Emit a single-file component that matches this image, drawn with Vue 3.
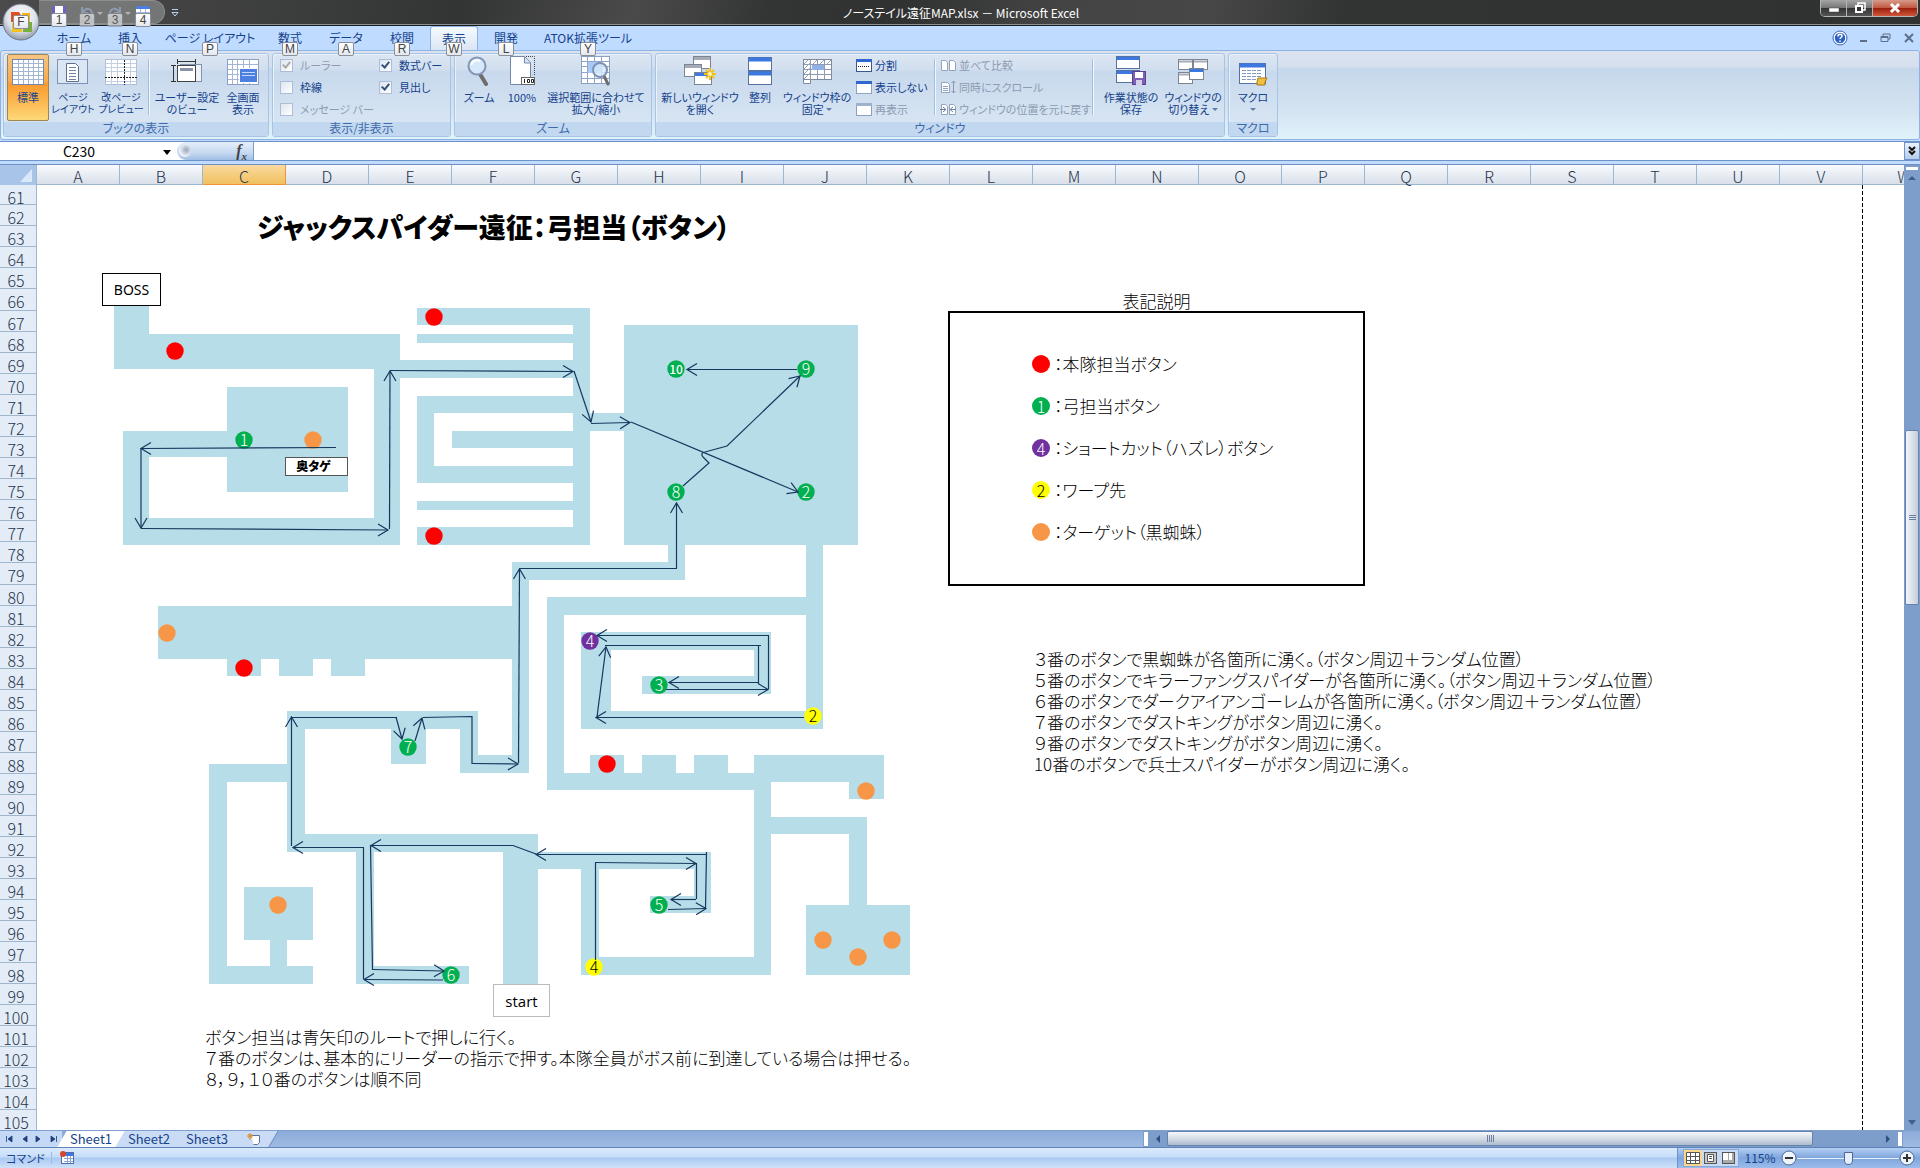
<template>
  <div class="excel">
    <header class="titlebar">
      <div class="qat">
        <button v-for="q in quickItems" :key="q.key" type="button" class="qat-btn" :class="{ 'is-dim': q.dim }" :aria-label="q.name">
          <svg v-if="q.name === 'save'" width="16" height="16" viewBox="0 0 16 16">
            <rect x="1" y="1" width="14" height="14" rx="1" fill="#6a63c4" />
            <rect x="4" y="1" width="8" height="7" fill="#fff" />
            <rect x="4" y="10" width="8" height="5" fill="#d9dcf2" />
          </svg>
          <svg v-else-if="q.name === 'undo'" width="24" height="16" viewBox="0 0 24 16">
            <path d="M3 2v6h6M4 7c3-5 9-4 9 2 0 3-2 4-4 5" fill="none" stroke="#9fb4d6" stroke-width="2" />
            <path d="M18 7h6l-3 3z" fill="#ddd" />
          </svg>
          <svg v-else-if="q.name === 'redo'" width="24" height="16" viewBox="0 0 24 16">
            <path d="M13 2v6H7M12 7C9 2 3 3 3 9c0 3 2 4 4 5" fill="none" stroke="#9fb4d6" stroke-width="2" />
            <path d="M18 7h6l-3 3z" fill="#ddd" />
          </svg>
          <svg v-else width="16" height="16" viewBox="0 0 16 16">
            <rect x="1" y="1" width="14" height="14" fill="#fff" />
            <rect x="1" y="1" width="14" height="3" fill="#4a7fe0" />
            <path d="M1 7.500h14M1 11.500h14M5.500 4v11M10.500 4v11" stroke="#9db8e0" />
          </svg>
          <kbd class="keytip qat-tip">{{ q.key }}</kbd>
        </button>
      </div>
      <svg class="qat-more" width="10" height="10" viewBox="0 0 10 10"><path d="M2 1.500h6M2 4.500h6L5 8z" fill="none" stroke="#b8d0f0" /></svg>
      <h1 class="caption">ノーステイル遠征MAP.xlsx － Microsoft Excel</h1>
      <div class="win-buttons">
        <button type="button" class="win-btn" aria-label="minimize"><svg width="12" height="10"><rect x="1" y="5" width="10" height="4" fill="#fff" stroke="#444" stroke-width=".5" /></svg></button>
        <button type="button" class="win-btn" aria-label="restore"><svg width="12" height="12"><path d="M4 3V1h7v7H9" fill="none" stroke="#fff" stroke-width="1.500" /><rect x="2" y="4" width="6" height="6" fill="#333" stroke="#fff" stroke-width="2" /></svg></button>
        <button type="button" class="win-btn win-close" aria-label="close"><svg width="12" height="10"><path d="M2 1l8 8M10 1L2 9" stroke="#fff" stroke-width="3" /></svg></button>
      </div>
    </header>

    <button type="button" class="office-btn" aria-label="Office">
      <svg width="38" height="38" viewBox="0 0 38 38">
        <defs>
          <radialGradient id="orb" cx=".5" cy=".35" r=".65">
            <stop offset="0" stop-color="#fff" /><stop offset=".6" stop-color="#dfe3ea" /><stop offset="1" stop-color="#8f99a8" />
          </radialGradient>
        </defs>
        <circle cx="19" cy="19" r="18" fill="url(#orb)" stroke="#6f7885" />
        <path d="M17 9H9v10h5v-5h6z" fill="#e2501d" />
        <path d="M20 10h8v9h-4v-5h-4z" fill="#f5b21b" />
        <path d="M10 20h4v5h6v4H10z" fill="#f0c31e" />
        <path d="M22 19h8v10h-9v-4h5z" fill="#79ae3a" />
      </svg>
      <kbd class="keytip office-tip">F</kbd>
    </button>

    <nav class="tabs">
      <button v-for="t in tabs" :key="t.key" type="button" class="tab" :class="[t.size, { 'is-active': t.active }]">
        {{ t.label }}<kbd class="keytip tab-tip">{{ t.key }}</kbd>
      </button>
      <div class="doc-buttons">
        <svg width="16" height="16" viewBox="0 0 16 16"><circle cx="8" cy="8" r="6" fill="#2f62c9" stroke="#fff" stroke-width="1.500" /><circle cx="8" cy="8" r="7" fill="none" stroke="#3c66b3" /><path d="M6 6.500c0-3 4-3 4-.5 0 1.500-2 1.500-2 3M8 10.500v1.500" fill="none" stroke="#fff" stroke-width="1.500" /></svg>
        <svg width="10" height="12"><rect x="1" y="8" width="7" height="2" fill="#5e6f8a" /></svg>
        <svg width="12" height="12"><path d="M3 4V2h7v5H8M1 4.500h7v5H1zM1 5.500h7" fill="none" stroke="#5e6f8a" /></svg>
        <svg width="12" height="12"><path d="M2 2l8 8M10 2l-8 8" stroke="#5e6f8a" stroke-width="2" /></svg>
      </div>
    </nav>

    <section class="ribbon">
      <div class="group">
        <div class="group-body">
          <button type="button" class="big w-42 is-on">
            <svg width="32" height="28" viewBox="0 0 32 28"><rect x=".5" y="2.500" width="31" height="25" fill="#fff" stroke="#6f87ad" /><path d="M1 6.500h30M1 10.500h30M1 14.500h30M1 18.500h30M1 22.500h30M6.500 3v24M11.500 3v24M16.500 3v24M21.500 3v24M26.500 3v24" stroke="#a3b6d4" /></svg>
            <span>標準</span>
          </button>
          <button type="button" class="big is-narrow w-48">
            <svg width="32" height="28" viewBox="0 0 32 28"><rect x=".5" y="2.500" width="30" height="24" fill="#dbe6f4" stroke="#7d92b5" /><path d="M9.500 6.500h9l3 3v15h-12z" fill="#fff" stroke="#5e6f8a" /><path d="M12 10.500h7M12 13.500h7M12 16.500h7M12 19.500h7M12 22.500h7" stroke="#6f83a6" /></svg>
            <span>ページ<br>レイアウト</span>
          </button>
          <button type="button" class="big is-narrow w-48">
            <svg width="32" height="28" viewBox="0 0 32 28"><rect x=".5" y="2.500" width="31" height="25" fill="#fff" stroke="#b1bfd6" /><path d="M1 6.500h30M1 10.500h30M1 14.500h30M1 24.500h30M6.500 3v24M12.500 3v24M25.500 3v24" stroke="#c3cfe2" /><path d="M19.500 3v25M0 20.500h32" stroke="#222" stroke-dasharray="2 1" /></svg>
            <span>改ページ<br>プレビュー</span>
          </button>
          <i class="sep"></i>
          <button type="button" class="big w-68">
            <svg width="32" height="28" viewBox="0 0 32 28"><rect x="9.500" y="7.500" width="21" height="17" fill="#eef3fa" stroke="#8093b0" /><rect x="6.500" y="8.500" width="18" height="16" fill="#fff" stroke="#444" /><rect x="9" y="11" width="13" height="3" fill="#8a93a3" /><path d="M6 4.500h19M6.500 2v5M24.500 2v5M2.500 8v16M0 8.500h5M0 24.500h5" stroke="#333" /></svg>
            <span>ユーザー設定<br>のビュー</span>
          </button>
          <button type="button" class="big w-44">
            <svg width="32" height="28" viewBox="0 0 32 28"><rect x=".5" y="2.500" width="31" height="25" fill="#fff" stroke="#8ba0c2" /><path d="M1 7.500h30M1 12.500h30M1 17.500h30M1 22.500h30M5.500 3v24M10.500 3v24M16.500 3v24M22.500 3v24" stroke="#a3b6d4" /><rect x="12.500" y="11.500" width="18" height="14" fill="#4b7fe0" stroke="#fff" /><path d="M15 15.500h13M15 18.500h13" stroke="#c5dafb" /></svg>
            <span>全画面<br>表示</span>
          </button>
        </div>
        <div class="group-label">ブックの表示</div>
      </div>

      <div class="group">
        <div class="group-body checks">
          <div v-for="(col, i) in checkColumns" :key="i" class="check-col">
            <label v-for="c in col" :key="c.label" class="check" :class="{ 'is-disabled': c.disabled }">
              <input type="checkbox" :checked="c.checked" :disabled="c.disabled">{{ c.label }}
            </label>
          </div>
        </div>
        <div class="group-label">表示/非表示</div>
      </div>

      <div class="group">
        <div class="group-body">
          <button type="button" class="big w-42">
            <svg width="32" height="30" viewBox="0 0 32 30"><path d="M17 18l6 10" stroke="#6d6d6d" stroke-width="4" stroke-linecap="round" /><circle cx="14" cy="10" r="8.500" fill="#d6e9fb" stroke="#8297b5" stroke-width="2" /><path d="M8 9c1-4 5-6 9-4" fill="none" stroke="#fff" stroke-width="2" /></svg>
            <span>ズーム</span>
          </button>
          <button type="button" class="big w-44">
            <svg width="32" height="30" viewBox="0 0 32 30"><path d="M4.500.500h14l6 6v22h-20z" fill="#fff" stroke="#7388aa" /><path d="M18.500 1v6h6" fill="#dbe6f4" stroke="#7388aa" /><path d="M20 .5h8.500V20" fill="none" stroke="#444" stroke-dasharray="1 1" /><rect x="15.500" y="21.500" width="13" height="7" fill="#fff" stroke="#666" /><path d="M18.500 23v4M21.500 23.500h2v3h-2zM25.500 23.500h2v3h-2z" stroke="#222" fill="none" /></svg>
            <span>100%</span>
          </button>
          <button type="button" class="big w-104">
            <svg width="32" height="30" viewBox="0 0 32 30"><rect x="1.500" y=".5" width="28" height="27" fill="#fff" stroke="#8ba0c2" /><path d="M2 5.500h27M2 10.500h27M2 16.500h27M2 22.500h27M7.500 1v26M14.500 1v26M21.500 1v26" stroke="#8fa6ca" /><rect x="8" y="6" width="13" height="11" fill="#a8c8f8" /><path d="M24 20l4 8" stroke="#6d6d6d" stroke-width="3" stroke-linecap="round" /><circle cx="20" cy="14" r="7" fill="#d6e9fb" fill-opacity=".8" stroke="#7e93b1" stroke-width="2" /></svg>
            <span>選択範囲に合わせて<br>拡大/縮小</span>
          </button>
        </div>
        <div class="group-label">ズーム</div>
      </div>

      <div class="group">
        <div class="group-body">
          <button type="button" class="big w-82">
            <svg width="32" height="30" viewBox="0 0 32 30"><g fill="#fff" stroke="#7b8492"><rect x="9.500" y=".5" width="17" height="12" /><rect x=".5" y="8.500" width="17" height="12" /><rect x="10.500" y="16.500" width="17" height="12" /></g><path d="M10 2.500h16M1 10.500h16" stroke="#a5acb8" stroke-width="3" /><path d="M11 18.500h16" stroke="#3c78df" stroke-width="3" /><path d="M26 12v12M20 18h12M22 14l8 8M30 14l-8 8" stroke="#f2bf1c" stroke-width="2" /><circle cx="26" cy="18" r="2" fill="#fff7b0" /></svg>
            <span>新しいウィンドウ<br>を開く</span>
          </button>
          <button type="button" class="big w-38">
            <svg width="32" height="30" viewBox="0 0 32 30"><rect x="4.500" y="1.500" width="23" height="13" fill="#fff" stroke="#5671a0" /><rect x="4.500" y="15.500" width="23" height="13" fill="#fff" stroke="#5671a0" /><path d="M5 3.500h22M5 17.500h22" stroke="#3c78df" stroke-width="4" /></svg>
            <span>整列</span>
          </button>
          <button type="button" class="big w-76">
            <svg width="32" height="28" viewBox="0 0 32 28"><rect x="2.500" y="2.500" width="28" height="20" fill="#fff" stroke="#7d8ba3" /><path d="M3 7.500h27M3 12.500h27M3 17.500h27M9.500 3v24M16.500 3v19M23.500 3v19" stroke="#8e9bb2" /><path d="M3 7l4-4M3 12l6-6M3 17l6-6M3 22l6-6M12 7l4-4M19 7l4-4M26 7l4-4" stroke="#9aa7bd" /><rect x="11" y="8" width="12" height="5" fill="#8db1e8" /><path d="M2.500 23v3.500h7V23" fill="#fff" stroke="#7d8ba3" /></svg>
            <span>ウィンドウ枠の<br>固定 <b class="caret"></b></span>
          </button>
          <ul class="small-list w-76">
            <li v-for="s in paneItems" :key="s.label">
              <button type="button" class="small" :disabled="s.disabled">
                <svg width="16" height="14" viewBox="0 0 16 14">
                  <rect x=".5" y="1.500" width="15" height="12" fill="#fff" :stroke="s.disabled ? '#8fa0ba' : '#3a5791'" :stroke-dasharray="s.kind === 'hide' ? '1 1' : null" />
                  <rect x="0" y="1" width="16" height="3" :fill="s.disabled ? '#9fb1cf' : '#2f66d0'" />
                  <path v-if="s.kind === 'split'" d="M2 8.500h12" stroke="#222" stroke-dasharray="1 1" />
                </svg>{{ s.label }}
              </button>
            </li>
          </ul>
          <i class="sep"></i>
          <ul class="small-list w-150">
            <li v-for="s in compareItems" :key="s.label">
              <button type="button" class="small" disabled>
                <svg width="16" height="14" viewBox="0 0 16 14">
                  <template v-if="s.kind === 'sync'">
                    <path d="M1.500 2.500h6l2 2v8h-8zM3 6.500h5M3 8.500h5M3 10.500h5" fill="#fff" stroke="#93a3bb" />
                    <path d="M13.500 1v12M11.500 3l2-2 2 2M11.500 11l2 2 2-2" fill="none" stroke="#8797b3" />
                  </template>
                  <template v-else>
                    <path d="M1.500 2.500h4l2 2v8h-6zM9.500 2.500h4l2 2v8h-6z" fill="#fff" stroke="#93a3bb" />
                    <path v-if="s.kind === 'reset'" d="M0 7.500h5M3 5l3 2.500L3 10M16 7.500h-5M13 5l-3 2.500 3 2.500" fill="none" stroke="#6f7f9b" />
                  </template>
                </svg>{{ s.label }}
              </button>
            </li>
          </ul>
          <i class="sep"></i>
          <button type="button" class="big w-68">
            <svg width="32" height="30" viewBox="0 0 32 30"><rect x="1.500" y=".5" width="23" height="12" fill="#fff" stroke="#5671a0" /><rect x="1.500" y="14.500" width="23" height="12" fill="#fff" stroke="#5671a0" /><path d="M2 2.500h22M2 16.500h22" stroke="#3c78df" stroke-width="3" /><rect x="17.500" y="15.500" width="13" height="13" fill="#7d5fb5" stroke="#5b4391" /><rect x="20" y="16" width="8" height="6" fill="#fff" /><rect x="21" y="24" width="6" height="5" fill="#d7d0ea" /></svg>
            <span>作業状態の<br>保存</span>
          </button>
          <button type="button" class="big w-56">
            <svg width="32" height="30" viewBox="0 0 32 30"><g fill="#fff" stroke="#7b8492"><rect x="1.500" y="3.500" width="14" height="10" /><rect x="16.500" y="3.500" width="14" height="10" /><rect x="1.500" y="16.500" width="14" height="11" /><rect x="12.500" y="12.500" width="14" height="11" /></g><path d="M2 5.500h13M17 5.500h13M2 18.500h10" stroke="#a5acb8" stroke-width="2" /><path d="M13 14.500h13" stroke="#3c78df" stroke-width="3" /></svg>
            <span>ウィンドウの<br>切り替え <b class="caret"></b></span>
          </button>
        </div>
        <div class="group-label">ウィンドウ</div>
      </div>

      <div class="group">
        <div class="group-body">
          <button type="button" class="big w-42">
            <svg width="32" height="30" viewBox="0 0 32 30"><rect x="2.500" y="7.500" width="26" height="20" fill="#fff" stroke="#5671a0" /><path d="M3 9.500h25" stroke="#3c78df" stroke-width="4" /><path d="M5 14.500h20M5 17.500h20M5 20.500h20M5 23.500h20" stroke="#8499c0" stroke-dasharray="4 1" /><path d="M21 22h9l-2 4v3h-8v-3z" fill="#f1c040" stroke="#a8780e" /></svg>
            <span>マクロ<br><b class="caret"></b></span>
          </button>
        </div>
        <div class="group-label">マクロ</div>
      </div>
    </section>

    <div class="formula-bar">
      <input class="name-box" type="text" value="C230" aria-label="名前ボックス">
      <svg class="name-arrow" width="8" height="5"><path d="M0 0h8L4 5z" fill="#000" /></svg>
      <div class="fx"><i class="fx-knob"></i><span>f<sub>x</sub></span></div>
      <input class="formula" type="text" aria-label="数式バー">
      <button type="button" class="expand" aria-label="展開"><svg width="8" height="10"><path d="M1 1l3 3 3-3M1 5l3 3 3-3" fill="none" stroke="#111" stroke-width="2" /></svg></button>
    </div>

    <main class="workbook">
      <div class="sheet">
        <div class="col-heads">
          <div class="corner"><svg width="36" height="20"><path d="M32 4v13H20z" fill="#dbe8fa" /></svg></div>
          <div v-for="c in columns" :key="c" class="col-head" :class="{ 'is-selected': c === 'C' }">{{ c }}</div>
        </div>
        <div class="sheet-body">
          <div class="row-heads">
            <div v-for="r in rows" :key="r" class="row-head" :class="{ 'is-first': r === 61, 'is-tall': r === 66 || r === 79 }">{{ r }}</div>
          </div>
          <div class="canvas">
            <svg class="map" width="1867" height="946" viewBox="37 185 1867 946">
              <defs>
                <marker id="head" viewBox="-11 -7 13 14" refX="0" refY="0" markerWidth="13" markerHeight="14" markerUnits="userSpaceOnUse" orient="auto">
                  <path d="M-10-6L0 0l-10 6" fill="none" stroke="#17375e" stroke-width="1.200" />
                </marker>
              </defs>
              <path class="page-break" d="M1862.500 185v946" />
              <g fill="#b7dde8" shape-rendering="crispEdges">
                <rect v-for="(b, i) in floor" :key="i" :x="b[0]" :y="b[1]" :width="b[2] - b[0]" :height="b[3] - b[1]" />
              </g>
              <g v-for="(d, i) in dots" :key="i">
                <circle :cx="d.x" :cy="d.y" r="8.700" :fill="palette[d.c]" />
                <text v-if="d.n" :x="d.x" :y="d.y + (d.n > 9 ? 5 : 6)" class="dot-num" :class="{ 'is-small': d.n > 9, 'is-dark': d.c === 'yellow' }">{{ d.n }}</text>
              </g>
              <g fill="none" stroke="#17375e" stroke-width="1.200">
                <path v-for="p in routes" :key="p" :d="p" marker-end="url(#head)" />
                <path v-for="p in links" :key="p" :d="p" />
              </g>
            </svg>
            <h2 class="note map-title">ジャックスパイダー遠征：弓担当（ボタン）</h2>
            <div class="shape boss">BOSS</div>
            <div class="shape start">start</div>
            <div class="shape target">奥タゲ</div>
            <p class="note foot-note">
              ボタン担当は青矢印のルートで押しに行く。<br>
              ７番のボタンは、基本的にリーダーの指示で押す。本隊全員がボス前に到達している場合は押せる。<br>
              ８，９，１０番のボタンは順不同
            </p>
            <section class="legend">
              <h3>表記説明</h3>
              <ul>
                <li v-for="l in legend" :key="l.label">
                  <span class="pin" :class="`pin-${l.c}`">{{ l.n }}</span>：{{ l.label }}
                </li>
              </ul>
            </section>
            <p class="note side-note">
              <template v-for="n in spawnNotes" :key="n">{{ n }}<br></template>
            </p>
          </div>
        </div>
      </div>
      <div class="vscroll">
        <i class="split-h"></i>
        <svg width="16" height="12"><path d="M4 8h8L8 4z" fill="#3f5f92" /></svg>
        <div class="vtrack"><div class="vthumb"><i></i><i></i><i></i></div></div>
        <svg width="16" height="14"><path d="M4 4h8L8 9z" fill="#3f5f92" /></svg>
      </div>
    </main>

    <div class="sheet-tabs">
      <div class="tab-nav">
        <svg width="60" height="16" viewBox="0 0 60 16"><path d="M6.500 5v6M12 5v6L8 8zM27 5v6l-4-3zM36 5v6l4-3zM51 5v6l4-3zM56.500 5v6" fill="#1f3f7a" stroke="#1f3f7a" stroke-width=".8" /></svg>
      </div>
      <button v-for="s in ['Sheet1', 'Sheet2', 'Sheet3']" :key="s" type="button" class="sheet-tab" :class="{ 'is-active': s === 'Sheet1' }"><span>{{ s }}</span></button>
      <button type="button" class="sheet-tab add" aria-label="ワークシートの挿入">
        <svg width="16" height="14"><path d="M5.500 3.500h8v7l-2 2h-4" fill="#fff" stroke="#59739f" /><path d="M4 1v7M1 4h6M2 2l4 4M6 2L2 6" stroke="#d98c1a" /></svg>
      </button>
      <div class="hscroll">
        <i class="split-v"></i>
        <svg width="18" height="16"><path d="M11 4v8L7 8z" fill="#2f4f85" /></svg>
        <div class="htrack"><div class="hthumb"><i></i><i></i><i></i><i></i></div></div>
        <svg width="18" height="16"><path d="M7 4v8l4-4z" fill="#2f4f85" /></svg>
        <i class="split-v"></i>
      </div>
    </div>

    <footer class="status">
      <span class="mode">コマンド</span>
      <svg class="macro-rec" width="16" height="16"><rect x="2.500" y="2.500" width="12" height="11" fill="#fff" stroke="#4d6ea8" /><path d="M3 4.500h11" stroke="#3c78df" stroke-width="3" /><path d="M5 8.500h9M5 11.500h9M8.500 6v7M11.500 6v7" stroke="#8ea8d4" /><circle cx="4" cy="4" r="3" fill="#d5472d" /></svg>
      <div class="zoom-area">
        <div class="views">
          <button type="button" class="view is-on" aria-label="標準"><svg width="14" height="12"><path d="M.5.500h13v11H.500zM1 4.500h12M1 8.500h12M4.500 1v10M9.500 1v10" fill="#fff" stroke="#555" /></svg></button>
          <button type="button" class="view" aria-label="ページ レイアウト"><svg width="14" height="12"><rect x=".5" y=".5" width="12" height="11" fill="#c9c9c9" stroke="#555" /><path d="M3.500 2.500h6v7h-6zM5 4.500h3M5 6.500h3" fill="#fff" stroke="#555" /></svg></button>
          <button type="button" class="view" aria-label="改ページ"><svg width="14" height="12"><rect x=".5" y=".5" width="12" height="11" fill="#aaa" stroke="#555" /><path d="M1 1h5v7H1zM7 1h3v7H7z" fill="#fff" /></svg></button>
        </div>
        <span class="percent">115%</span>
        <button type="button" class="zoom-btn" aria-label="縮小"><svg width="16" height="16"><circle cx="8" cy="8" r="7" fill="#eef4fc" stroke="#4c6796" /><path d="M4 8h8" stroke="#333" stroke-width="2" /></svg></button>
        <input class="zoom-range" type="range" min="0" max="100" value="50" aria-label="ズーム">
        <button type="button" class="zoom-btn" aria-label="拡大"><svg width="16" height="16"><circle cx="8" cy="8" r="7" fill="#eef4fc" stroke="#4c6796" /><path d="M4 8h8M8 4v8" stroke="#333" stroke-width="2" /></svg></button>
      </div>
    </footer>
  </div>
</template>

<script setup>
const quickItems = [
  { key: '1', name: 'save' },
  { key: '2', name: 'undo', dim: true },
  { key: '3', name: 'redo', dim: true },
  { key: '4', name: 'table' }
]

const tabs = [
  { label: 'ホーム', key: 'H', size: 'w-56' },
  { label: '挿入', key: 'N', size: 'w-56' },
  { label: 'ページ レイアウト', key: 'P', size: 'w-104' },
  { label: '数式', key: 'M', size: 'w-56' },
  { label: 'データ', key: 'A', size: 'w-56' },
  { label: '校閲', key: 'R', size: 'w-56' },
  { label: '表示', key: 'W', size: 'w-48', active: true },
  { label: '開発', key: 'L', size: 'w-56' },
  { label: 'ATOK拡張ツール', key: 'Y', size: 'w-108' }
]

const checkColumns = [
  [
    { label: 'ルーラー', checked: true, disabled: true },
    { label: '枠線' },
    { label: 'メッセージ バー', disabled: true }
  ],
  [
    { label: '数式バー', checked: true },
    { label: '見出し', checked: true }
  ]
]

const paneItems = [
  { label: '分割', kind: 'split' },
  { label: '表示しない', kind: 'hide' },
  { label: '再表示', kind: 'show', disabled: true }
]

const compareItems = [
  { label: '並べて比較', kind: 'side' },
  { label: '同時にスクロール', kind: 'sync' },
  { label: 'ウィンドウの位置を元に戻す', kind: 'reset' }
]

const columns = 'ABCDEFGHIJKLMNOPQRSTUVW'.split('')
const rows = Array.from({ length: 45 }, (_, i) => i + 61)

const palette = { red: '#ff0000', green: '#00b050', purple: '#7030a0', yellow: '#ffff00', orange: '#f79646' }

// corridors and rooms: left, top, right, bottom
const floor = [
  [114, 306, 149, 369], [114, 334, 400, 369], [374, 360, 400, 545], [123, 518, 400, 545],
  [123, 431, 149, 545], [123, 431, 227, 457], [227, 387, 348, 492], [400, 360, 590, 378],
  [573, 308, 590, 545], [417, 308, 573, 325], [417, 334, 573, 343], [417, 396, 573, 413],
  [452, 431, 573, 448], [417, 466, 573, 483], [417, 396, 434, 483], [417, 501, 573, 510],
  [417, 527, 573, 545], [590, 413, 624, 431], [624, 325, 858, 545], [668, 545, 685, 580],
  [512, 562, 685, 580], [512, 562, 529, 773], [806, 545, 823, 729], [547, 597, 823, 615],
  [547, 597, 564, 790], [547, 773, 771, 790], [590, 755, 624, 773], [642, 755, 676, 773],
  [694, 755, 728, 773], [754, 755, 884, 782], [849, 755, 884, 799], [754, 755, 771, 975],
  [581, 957, 771, 975], [581, 852, 599, 975], [538, 852, 711, 869], [694, 852, 711, 913],
  [650, 896, 711, 913], [771, 817, 867, 834], [849, 817, 867, 905], [806, 905, 910, 975],
  [581, 711, 823, 729], [581, 632, 611, 729], [581, 632, 771, 650], [754, 632, 771, 694],
  [642, 676, 771, 694], [158, 606, 512, 659], [227, 659, 261, 676], [279, 659, 313, 676],
  [331, 659, 365, 676], [287, 711, 478, 729], [287, 711, 305, 852], [391, 729, 426, 764],
  [460, 711, 478, 773], [460, 755, 529, 773], [209, 764, 287, 782], [209, 764, 227, 984],
  [209, 966, 313, 984], [270, 940, 287, 966], [244, 887, 313, 940], [287, 834, 538, 852],
  [356, 834, 374, 984], [356, 966, 469, 984], [503, 834, 538, 984]
]

const dots = [
  { x: 175, y: 351, c: 'red' }, { x: 434, y: 317, c: 'red' }, { x: 434, y: 536, c: 'red' },
  { x: 244, y: 668, c: 'red' }, { x: 607, y: 764, c: 'red' },
  { x: 313, y: 440, c: 'orange' }, { x: 167, y: 633, c: 'orange' }, { x: 278, y: 905, c: 'orange' },
  { x: 866, y: 791, c: 'orange' }, { x: 823, y: 940, c: 'orange' }, { x: 892, y: 940, c: 'orange' },
  { x: 858, y: 957, c: 'orange' },
  { x: 244, y: 440, c: 'green', n: 1 }, { x: 806, y: 492, c: 'green', n: 2 },
  { x: 659, y: 685, c: 'green', n: 3 }, { x: 659, y: 905, c: 'green', n: 5 },
  { x: 451, y: 975, c: 'green', n: 6 }, { x: 408, y: 747, c: 'green', n: 7 },
  { x: 676, y: 492, c: 'green', n: 8 }, { x: 806, y: 369, c: 'green', n: 9 },
  { x: 676, y: 369, c: 'green', n: 10 }, { x: 590, y: 641, c: 'purple', n: 4 },
  { x: 813, y: 716, c: 'yellow', n: 2 }, { x: 594, y: 967, c: 'yellow', n: 4 }
]

// connectors that end in an arrow head
const routes = [
  'M336 447.500L141 448.500', 'M141 448V528', 'M141 528.500L388 530', 'M389.500 529L390 371',
  'M390 370.500L573 371.500', 'M574 371L591 422', 'M591 423.500L630 422.500', 'M631 422L798 492',
  'M683 486L709 463L703 457Q700 453 705 452L727 446L800 376', 'M797 369.500H687', 'M676.500 568V503',
  'M518.500 763L519.500 569', 'M472 763.500L518 764', 'M415 741L422 718', 'M396 717L402 739',
  'M291.500 846V717', 'M363 847.500H293', 'M443 980L364 979.500', 'M372 969.500L444 971',
  'M513 845.500H371', 'M707 854.500H536', 'M668 909.500L706 908.500', 'M696 899.500H671',
  'M595 862.500L696 863.500', 'M804 717.500H596', 'M597 717L606 647', 'M758 682.500H669',
  'M666 689.500H768', 'M769 635.500H597'
]

const links = [
  'M519 568.500H677', 'M423 717.500L472 716.500V764', 'M292 717.500H397', 'M363.500 847V979',
  'M370.500 845L372.500 970', 'M513 845.500L536 854', 'M706.500 852L705.500 908', 'M696.500 863V899',
  'M595.500 960V863', 'M605 645.500H761', 'M758.500 645V684', 'M768.500 689V635'
]

const legend = [
  { c: 'red', label: '本隊担当ボタン' },
  { c: 'green', n: 1, label: '弓担当ボタン' },
  { c: 'purple', n: 4, label: 'ショートカット（ハズレ）ボタン' },
  { c: 'yellow', n: 2, label: 'ワープ先' },
  { c: 'orange', label: 'ターゲット（黒蜘蛛）' }
]

const spawnNotes = [
  '３番のボタンで黒蜘蛛が各箇所に湧く。（ボタン周辺＋ランダム位置）',
  '５番のボタンでキラーファングスパイダーが各箇所に湧く。（ボタン周辺＋ランダム位置）',
  '６番のボタンでダークアイアンゴーレムが各箇所に湧く。（ボタン周辺＋ランダム位置）',
  '７番のボタンでダストキングがボタン周辺に湧く。',
  '９番のボタンでダストキングがボタン周辺に湧く。',
  '10番のボタンで兵士スパイダーがボタン周辺に湧く。'
]
</script>

<style>
body {
  margin: 0;
}
</style>

<style scoped>
.excel {
  position: relative;
  display: flex;
  flex-direction: column;
  height: 100vh;
  overflow: hidden;
  background: #bfdbff;
  color: #15428b;
  font-family: "Noto Sans CJK JP", "Liberation Sans", sans-serif;
  font-size: 12px;
  font-feature-settings: "palt";
  line-height: 12px;
}

.excel *,
.excel *::before,
.excel *::after {
  box-sizing: border-box;
}

button,
input {
  margin: 0;
  padding: 0;
  border: 0;
  background: none;
  color: inherit;
  font: inherit;
  font-feature-settings: inherit;
}

ul,
p,
h1,
h2,
h3 {
  margin: 0;
  padding: 0;
  font-size: inherit;
  font-weight: inherit;
  list-style: none;
}

svg {
  display: block;
  flex-shrink: 0;
}

.w-38 { width: 38px; }
.w-42 { width: 42px; }
.w-44 { width: 44px; }
.w-48 { width: 48px; }
.w-56 { width: 56px; }
.w-68 { width: 68px; }
.w-76 { width: 76px; }
.w-82 { width: 82px; }
.w-104 { width: 104px; }
.w-108 { width: 108px; }
.w-150 { width: 150px; }

.keytip {
  position: absolute;
  display: block;
  width: 16px;
  height: 14px;
  border: 1px solid #8a8f98;
  border-radius: 2px;
  background: linear-gradient(#fff, #e4e7ee);
  color: #444;
  font-family: "Liberation Sans", sans-serif;
  font-size: 12px;
  line-height: 12px;
  text-align: center;
}

/* title bar */
.titlebar {
  display: flex;
  align-items: flex-start;
  flex-shrink: 0;
  height: 26px;
  border-bottom: 1px solid #1b1d1c;
  background: linear-gradient(100deg, #4b4b4b 0, #333534 24%, #4a4a4a 33%, #333534 40%, #303231 47%, #444 55%, #464746 63%, #323433 70%, #303231 100%);
  box-shadow: inset 0 -1px 0 #8a9096;
}

.qat {
  display: flex;
  gap: 12px;
  width: 126px;
  height: 24px;
  margin-left: 39px;
  padding: 4px 12px 0;
  border: 1px solid #8d8d8d;
  border-left: 0;
  border-radius: 0 12px 12px 0;
  background: #747575;
}

.qat-btn {
  position: relative;
  width: 16px;
  height: 16px;
}

.is-dim {
  opacity: 0.6;
}

.qat-tip {
  top: 8px;
  left: 0;
}

.qat-more {
  margin: 8px 0 0 5px;
}

.caption {
  flex: 1;
  padding-right: 78px;
  color: #fff;
  line-height: 26px;
  text-align: center;
}

.win-buttons {
  display: flex;
  height: 17px;
  margin-right: 2px;
  border: 1px solid #b5b5b5;
  border-top: 0;
  border-radius: 0 0 5px 5px;
  overflow: hidden;
}

.win-btn {
  display: flex;
  align-items: center;
  justify-content: center;
  width: 26px;
  border-right: 1px solid #b5b5b5;
  background: linear-gradient(#a5a5a5, #777 48%, #333 52%, #555);
}

.win-close {
  width: 44px;
  border-right: 0;
  background: linear-gradient(#d79a8a, #c25a42 48%, #9b1f0c 52%, #d0563b);
}

.office-btn {
  position: absolute;
  top: 3px;
  left: 2px;
  z-index: 2;
}

.office-tip {
  top: 12px;
  left: 11px;
}

/* ribbon tabs */
.tabs {
  display: flex;
  flex-shrink: 0;
  height: 24px;
  padding-left: 46px;
}

.tab {
  position: relative;
  height: 24px;
  white-space: nowrap;
}

.tab.is-active {
  border: 1px solid #8db2e3;
  border-bottom: 0;
  border-radius: 3px 3px 0 0;
  background: linear-gradient(#f5faff, #dbe6f4);
}

.tab-tip {
  top: 16px;
  left: calc(50% - 8px);
  z-index: 2;
}

.tab.is-active .tab-tip {
  top: 15px;
}

.doc-buttons {
  display: flex;
  align-items: center;
  gap: 11px;
  margin: 0 5px 0 auto;
}

/* ribbon */
.ribbon {
  display: flex;
  flex-shrink: 0;
  gap: 3px;
  height: 90px;
  padding: 2px;
  border: 1px solid #8db2e3;
  border-radius: 3px;
  background: linear-gradient(#dbe3f0, #d5dfed 18%, #c5d7ea 20%, #d5e4f2 70%, #e0f3fb);
}

.group {
  display: flex;
  flex-direction: column;
  height: 84px;
  border: 1px solid #a6c4e6;
  border-radius: 3px;
  background: linear-gradient(#dde6f2, #d2dfef 18%, #c8d9ed 22%, #dbe8f4);
  box-shadow: inset 1px 1px 0 #e9f1fa;
}

.group-body {
  display: flex;
  flex: 1;
  padding: 0 3px;
}

.group-label {
  height: 14px;
  background: #c1d8f0;
  color: #3e6aaa;
  line-height: 12px;
  text-align: center;
}

.big {
  display: flex;
  flex-direction: column;
  align-items: center;
  height: 67px;
  padding-top: 2px;
  font-size: 11px;
  white-space: nowrap;
}

.big.is-narrow {
  font-size: 10px;
}

.big svg {
  height: 30px;
}

.big span {
  margin-top: 5px;
}

.big.is-on {
  padding-top: 1px;
  border: 1px solid #a18650;
  border-radius: 2px;
  background: linear-gradient(#f6c585, #f9a94d 40%, #fa9a2e 45%, #fdd878);
}

.sep {
  width: 2px;
  height: 56px;
  margin: 5px 3px 0;
  border-left: 1px solid #9fbfe2;
  background: #f2f7fc;
}

.caret {
  display: inline-block;
  border: 3px solid transparent;
  border-top-color: #5f7fb0;
  border-bottom: 0;
  vertical-align: 3px;
}

.checks {
  gap: 9px;
}

.check-col {
  width: 90px;
}

.check-col + .check-col {
  width: 72px;
}

.check {
  display: flex;
  align-items: center;
  gap: 7px;
  height: 22px;
  padding-left: 4px;
  font-size: 11px;
  white-space: nowrap;
}

.check.is-disabled {
  color: #8d9bb0;
}

.check input {
  position: relative;
  width: 13px;
  height: 13px;
  flex-shrink: 0;
  appearance: none;
  border: 1px solid #abbdd8;
  background: linear-gradient(135deg, #dfe5ee, #fff);
}

.check input:checked::after {
  content: "";
  position: absolute;
  top: 0;
  left: 3px;
  width: 5px;
  height: 8px;
  border: solid #35527f;
  border-width: 0 2px 2px 0;
  transform: rotate(40deg);
}

.check input:disabled:checked::after {
  border-color: #a9a9a9;
}

.small-list {
  padding-left: 1px;
}

.small {
  display: flex;
  align-items: center;
  gap: 3px;
  height: 22px;
  font-size: 11px;
  white-space: nowrap;
}

.small:disabled {
  color: #8d9bb0;
}

/* formula bar */
.formula-bar {
  display: flex;
  flex-shrink: 0;
  height: 20px;
  margin: 1px 0 3px;
  border: solid #6d93c9;
  border-width: 1px 0;
  background: #fff;
  color: #000;
}

.name-box {
  width: 158px;
  font-size: 14px;
  text-align: center;
}

.name-arrow {
  margin: 8px 6px 0 5px;
}

.fx {
  display: flex;
  align-items: center;
  justify-content: space-between;
  width: 77px;
  padding: 0 6px 0 2px;
  border-right: 1px solid #7a9bcb;
  border-radius: 10px 0 0 10px;
  background: linear-gradient(#e6effa, #c6d9f1 60%, #9fbfe6);
  color: #444;
  font-family: "Liberation Serif", serif;
  font-size: 16px;
  font-style: italic;
  font-weight: 700;
}

.fx sub {
  font-size: 11px;
  line-height: 0;
}

.fx-knob {
  width: 12px;
  height: 12px;
  border-radius: 50%;
  background: radial-gradient(circle at 60% 40%, #9aa7ba, #f4f8fd 70%);
}

.formula {
  flex: 1;
}

.expand {
  display: flex;
  align-items: center;
  justify-content: center;
  width: 16px;
  border: 1px solid #6d93c9;
  background: linear-gradient(#e8f1fc, #b5cdec);
}

/* sheet */
.workbook {
  display: flex;
  flex: 1;
  min-height: 0;
  border-top: 1px solid #6f8fc0;
}

.sheet {
  display: flex;
  flex: 1;
  flex-direction: column;
  min-width: 0;
  overflow: hidden;
  background: #fff;
}

.col-heads {
  display: flex;
  flex-shrink: 0;
  height: 20px;
}

.corner {
  flex: 0 0 37px;
  border-right: 1px solid #9eb6ce;
  background: #a9c4e9;
}

.col-head {
  flex: 0 0 83px;
  border: solid #9eb6ce;
  border-width: 0 1px 1px 0;
  background: linear-gradient(#f9fbfd, #d8dfea);
  color: #27344a;
  font-size: 16px;
  font-weight: 300;
  line-height: 22px;
  text-align: center;
}

.col-head.is-selected {
  border-color: #f29536;
  background: linear-gradient(#f9d99f, #f1c15f);
}

.sheet-body {
  display: flex;
  flex: 1;
  min-height: 0;
}

.row-heads {
  flex: 0 0 37px;
  border-right: 1px solid #9eb6ce;
  background: #e4ecf7;
}

.row-head {
  height: 21px;
  padding-right: 4px;
  border-bottom: 1px solid #9eb6ce;
  color: #27344a;
  font-size: 16px;
  font-weight: 300;
  line-height: 24px;
  text-align: center;
}

.row-head.is-first {
  height: 20px;
}

.row-head.is-tall {
  height: 22px;
}

.canvas {
  position: relative;
  flex: 1;
  min-width: 0;
  overflow: hidden;
  color: #000;
}

.page-break {
  stroke: #000;
  stroke-dasharray: 4 2;
}

.dot-num {
  fill: #fff;
  font-size: 16px;
  font-weight: 300;
  text-anchor: middle;
}

.dot-num.is-small {
  font-size: 12px;
  font-weight: 500;
}

.dot-num.is-dark {
  fill: #000;
}

.note {
  position: absolute;
  font-size: 17px;
  font-weight: 300;
  line-height: 21px;
  white-space: nowrap;
}

.map-title {
  top: 24px;
  left: 220px;
  font-size: 27px;
  font-weight: 900;
  line-height: 36px;
}

.shape {
  position: absolute;
  border: 1px solid #000;
  background: #fff;
  font-family: "Open Sans", sans-serif;
  font-size: 15px;
  line-height: 32px;
  text-align: center;
}

.boss {
  top: 88px;
  left: 65px;
  width: 59px;
  height: 33px;
  font-family: "Noto Sans", sans-serif;
  font-size: 14px;
}

.start {
  top: 799px;
  left: 456px;
  width: 57px;
  height: 33px;
  border-color: #bbb;
}

.target {
  top: 272px;
  left: 248px;
  width: 63px;
  height: 19px;
  padding-right: 6px;
  border-color: #555;
  font-family: "Noto Sans CJK JP", sans-serif;
  font-size: 12px;
  font-weight: 900;
  line-height: 16px;
}

.foot-note {
  top: 841px;
  left: 168px;
}

.legend {
  position: absolute;
  top: 105px;
  left: 911px;
  width: 417px;
  font-size: 17px;
  font-weight: 300;
}

.legend h3 {
  line-height: 21px;
  text-align: center;
}

.legend ul {
  height: 275px;
  padding: 30px 0 0 82px;
  border: 2px solid #000;
}

.legend li {
  display: flex;
  align-items: center;
  height: 42px;
  white-space: nowrap;
}

.pin {
  width: 18px;
  height: 18px;
  margin-right: 4px;
  border-radius: 50%;
  color: #fff;
  font-size: 16px;
  line-height: 18px;
  text-align: center;
}

.pin-red { background: #ff0000; }
.pin-green { background: #00b050; }
.pin-purple { background: #7030a0; }
.pin-yellow { background: #ffff00; color: #000; }
.pin-orange { background: #f79646; }

.side-note {
  top: 463px;
  left: 997px;
}

.vscroll {
  display: flex;
  flex: 0 0 16px;
  flex-direction: column;
  background: #7d9dcb;
}

.split-h {
  height: 7px;
  border: 2px solid #7d9dcb;
  background: #fff;
}

.vtrack {
  flex: 1;
  padding-top: 246px;
}

.vthumb {
  display: flex;
  flex-direction: column;
  align-items: center;
  justify-content: center;
  gap: 1px;
  height: 175px;
  margin: 0 1px;
  border: 1px solid #6683ad;
  border-radius: 2px;
  background: linear-gradient(90deg, #f1f5fa, #c3cedd);
}

.vthumb i {
  width: 7px;
  height: 1px;
  background: #6a7f9f;
}

/* sheet tabs */
.sheet-tabs {
  display: flex;
  flex-shrink: 0;
  height: 17px;
  border-top: 1px solid #7f9fcf;
  background: linear-gradient(#8dabd9, #9fbbe3);
}

.tab-nav {
  width: 62px;
  background: #c4d9f5;
}

.sheet-tab {
  position: relative;
  width: 58px;
  height: 16px;
  font-size: 13px;
}

.sheet-tab::before {
  content: "";
  position: absolute;
  inset: 0 -2px 0 0;
  border-right: 1px solid #5f82b8;
  background: #cadcf5;
  transform: skewX(-30deg);
}

.sheet-tab.is-active::before {
  background: #fff;
}

.sheet-tab span,
.sheet-tab svg {
  position: relative;
}

.sheet-tab.add {
  width: 36px;
  padding-left: 10px;
}

.hscroll {
  display: flex;
  flex: 0 0 760px;
  margin: 0 17px 0 auto;
  background: #7d9dcb;
}

.split-v {
  width: 6px;
  border: 1px solid #7d9dcb;
  background: #fff;
}

.htrack {
  flex: 1;
  padding-right: 66px;
}

.hthumb {
  display: flex;
  align-items: center;
  justify-content: center;
  gap: 1px;
  height: 15px;
  border: 1px solid #6683ad;
  border-radius: 2px;
  background: linear-gradient(#f5f8fb, #d5dce6 50%, #aebccf);
}

.hthumb i {
  width: 1px;
  height: 7px;
  background: #6a7f9f;
}

/* status bar */
.status {
  display: flex;
  align-items: center;
  flex-shrink: 0;
  height: 21px;
  border-top: 1px solid #5f82b8;
  background: linear-gradient(#dcebfd, #c5dcf8 45%, #a9c8f2 50%, #cfe1f8);
}

.mode {
  width: 52px;
  padding-left: 6px;
  border-right: 1px solid #9dbbe4;
  font-size: 11px;
}

.macro-rec {
  margin-left: 7px;
}

.zoom-area {
  display: flex;
  align-items: center;
  height: 20px;
  margin-left: auto;
  padding: 0 5px;
  border-left: 1px solid #6f93c9;
  background: linear-gradient(#b4cff3, #7ea5dc 50%, #9cbdec);
}

.views {
  display: flex;
  height: 18px;
  border: 1px solid #86a7d7;
  background: #c7dbf5;
}

.view {
  display: flex;
  align-items: center;
  justify-content: center;
  width: 18px;
}

.view.is-on {
  background: #fbd58b;
}

.percent {
  width: 42px;
  text-align: center;
}

.zoom-btn {
  width: 16px;
  height: 16px;
}

.zoom-range {
  width: 102px;
  height: 16px;
  appearance: none;
  background: linear-gradient(#e8f1fd, #e8f1fd) center / 100% 1px no-repeat;
}

.zoom-range::-webkit-slider-thumb {
  width: 9px;
  height: 13px;
  appearance: none;
  border: 1px solid #4c6796;
  border-radius: 1px 1px 5px 5px;
  background: #e6eefa;
}
</style>
